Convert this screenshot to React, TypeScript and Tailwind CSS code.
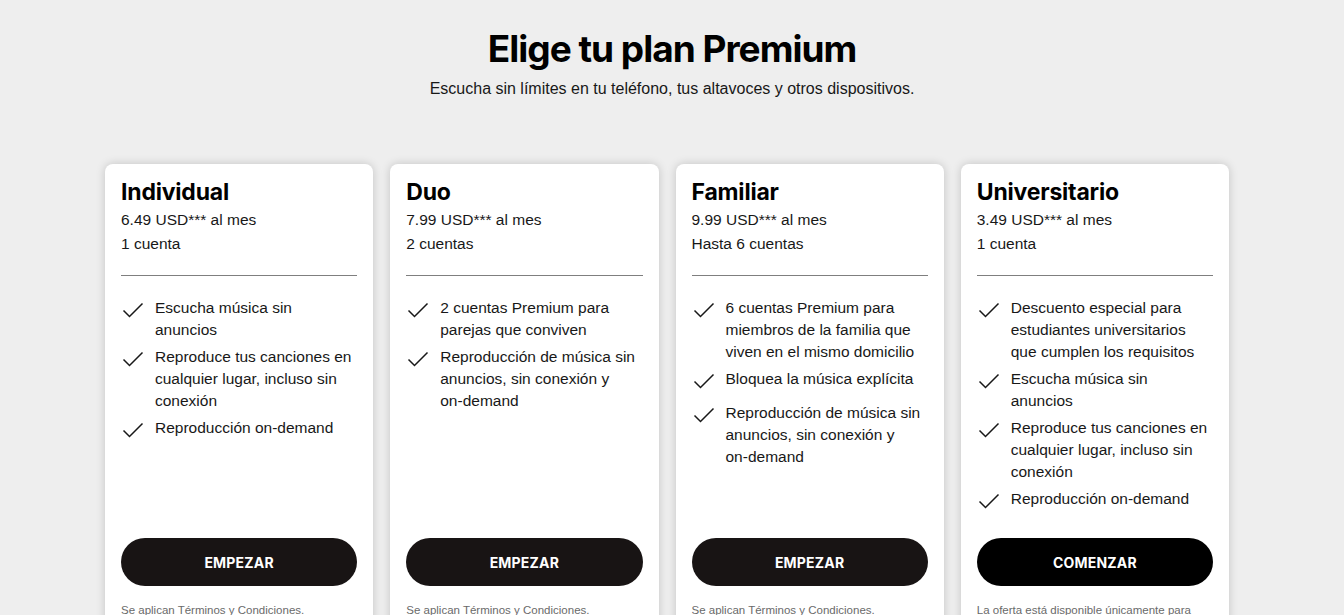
import React from "react";

type Plan = {
  name: string;
  price: string;
  accounts: string;
  features: string[];
  cta: string;
  dark?: boolean;
  note: string;
};

const plans: Plan[] = [
  {
    name: "Individual",
    price: "6.49 USD*** al mes",
    accounts: "1 cuenta",
    features: [
      "Escucha música sin anuncios",
      "Reproduce tus canciones en cualquier lugar, incluso sin conexión",
      "Reproducción on-demand",
    ],
    cta: "EMPEZAR",
    note: "Se aplican Términos y Condiciones.",
  },
  {
    name: "Duo",
    price: "7.99 USD*** al mes",
    accounts: "2 cuentas",
    features: [
      "2 cuentas Premium para parejas que conviven",
      "Reproducción de música sin anuncios, sin conexión y on\u2011demand",
    ],
    cta: "EMPEZAR",
    note: "Se aplican Términos y Condiciones.",
  },
  {
    name: "Familiar",
    price: "9.99 USD*** al mes",
    accounts: "Hasta 6 cuentas",
    features: [
      "6 cuentas Premium para miembros de la familia que viven en el mismo domicilio",
      "Bloquea la música explícita",
      "Reproducción de música sin anuncios, sin conexión y on\u2011demand",
    ],
    cta: "EMPEZAR",
    note: "Se aplican Términos y Condiciones.",
  },
  {
    name: "Universitario",
    price: "3.49 USD*** al mes",
    accounts: "1 cuenta",
    features: [
      "Descuento especial para estudiantes universitarios que cumplen los requisitos",
      "Escucha música sin anuncios",
      "Reproduce tus canciones en cualquier lugar, incluso sin conexión",
      "Reproducción on-demand",
    ],
    cta: "COMENZAR",
    dark: true,
    note: "La oferta está disponible únicamente para estudiantes de instituciones acreditadas.",
  },
];

const Check = () => (
  <svg width="22" height="18" viewBox="0 0 22 18" fill="none" className="shrink-0 mt-[4px] ml-[1px]">
    <path d="M1.5 9.5 L7.5 15.5 L20.5 2.5" stroke="#181818" strokeWidth="1.5" />
  </svg>
);

const PlanCard = ({ plan }: { plan: Plan }) => (
  <div className="bg-white rounded-lg shadow-[0_0_10px_rgba(0,0,0,0.18)] px-4 pt-[14px] pb-6 flex flex-col">
    <h2 className="font-['Inter',sans-serif] font-bold text-[23px] leading-[28px] tracking-[-0.2px] text-black">
      {plan.name}
    </h2>
    <p className="text-[15.5px] leading-[24px] mt-[2px] text-[#181818]">{plan.price}</p>
    <p className="text-[15.5px] leading-[24px] text-[#181818]">{plan.accounts}</p>
    <hr className="border-0 border-t border-[#7f7f7f] mt-[19px] mb-[21px]" />
    <ul className="flex flex-col gap-[5px] flex-1">
      {plan.features.map((f) => (
        <li key={f} className="flex gap-[11px] min-h-[29px]">
          <Check />
          <span className="text-[15.5px] leading-[22px] text-[#181818]">{f}</span>
        </li>
      ))}
    </ul>
    <button
      className={`mt-[21px] h-12 rounded-full text-white text-[14px] font-bold tracking-[0.2px] font-['Inter',sans-serif] ${
        plan.dark ? "bg-black" : "bg-[#181414]"
      }`}
    >
      {plan.cta}
    </button>
    {/* fixed height keeps the buttons on one line across the row */}
    <p className="mt-[16px] h-[48px] text-[11.5px] leading-[16px] text-[#6a6a6a]">{plan.note}</p>
  </div>
);

export default function App() {
  return (
    <div className="min-h-screen bg-[#eeeeee] font-['Liberation_Sans',Arial,sans-serif] overflow-hidden">
      <div className="pt-[26px] text-center">
        <h1 className="font-['Inter',sans-serif] font-bold text-[37px] leading-[46px] tracking-[-1px] text-black">
          Elige tu plan Premium
        </h1>
        <p className="mt-[6px] text-[16px] leading-[22px] text-[#181818]">
          Escucha sin límites en tu teléfono, tus altavoces y otros dispositivos.
        </p>
      </div>
      <div className="ml-[105px] w-[1124px] mt-[64px] grid grid-cols-4 gap-[17px]">
        {plans.map((p) => (
          <PlanCard key={p.name} plan={p} />
        ))}
      </div>
    </div>
  );
}
